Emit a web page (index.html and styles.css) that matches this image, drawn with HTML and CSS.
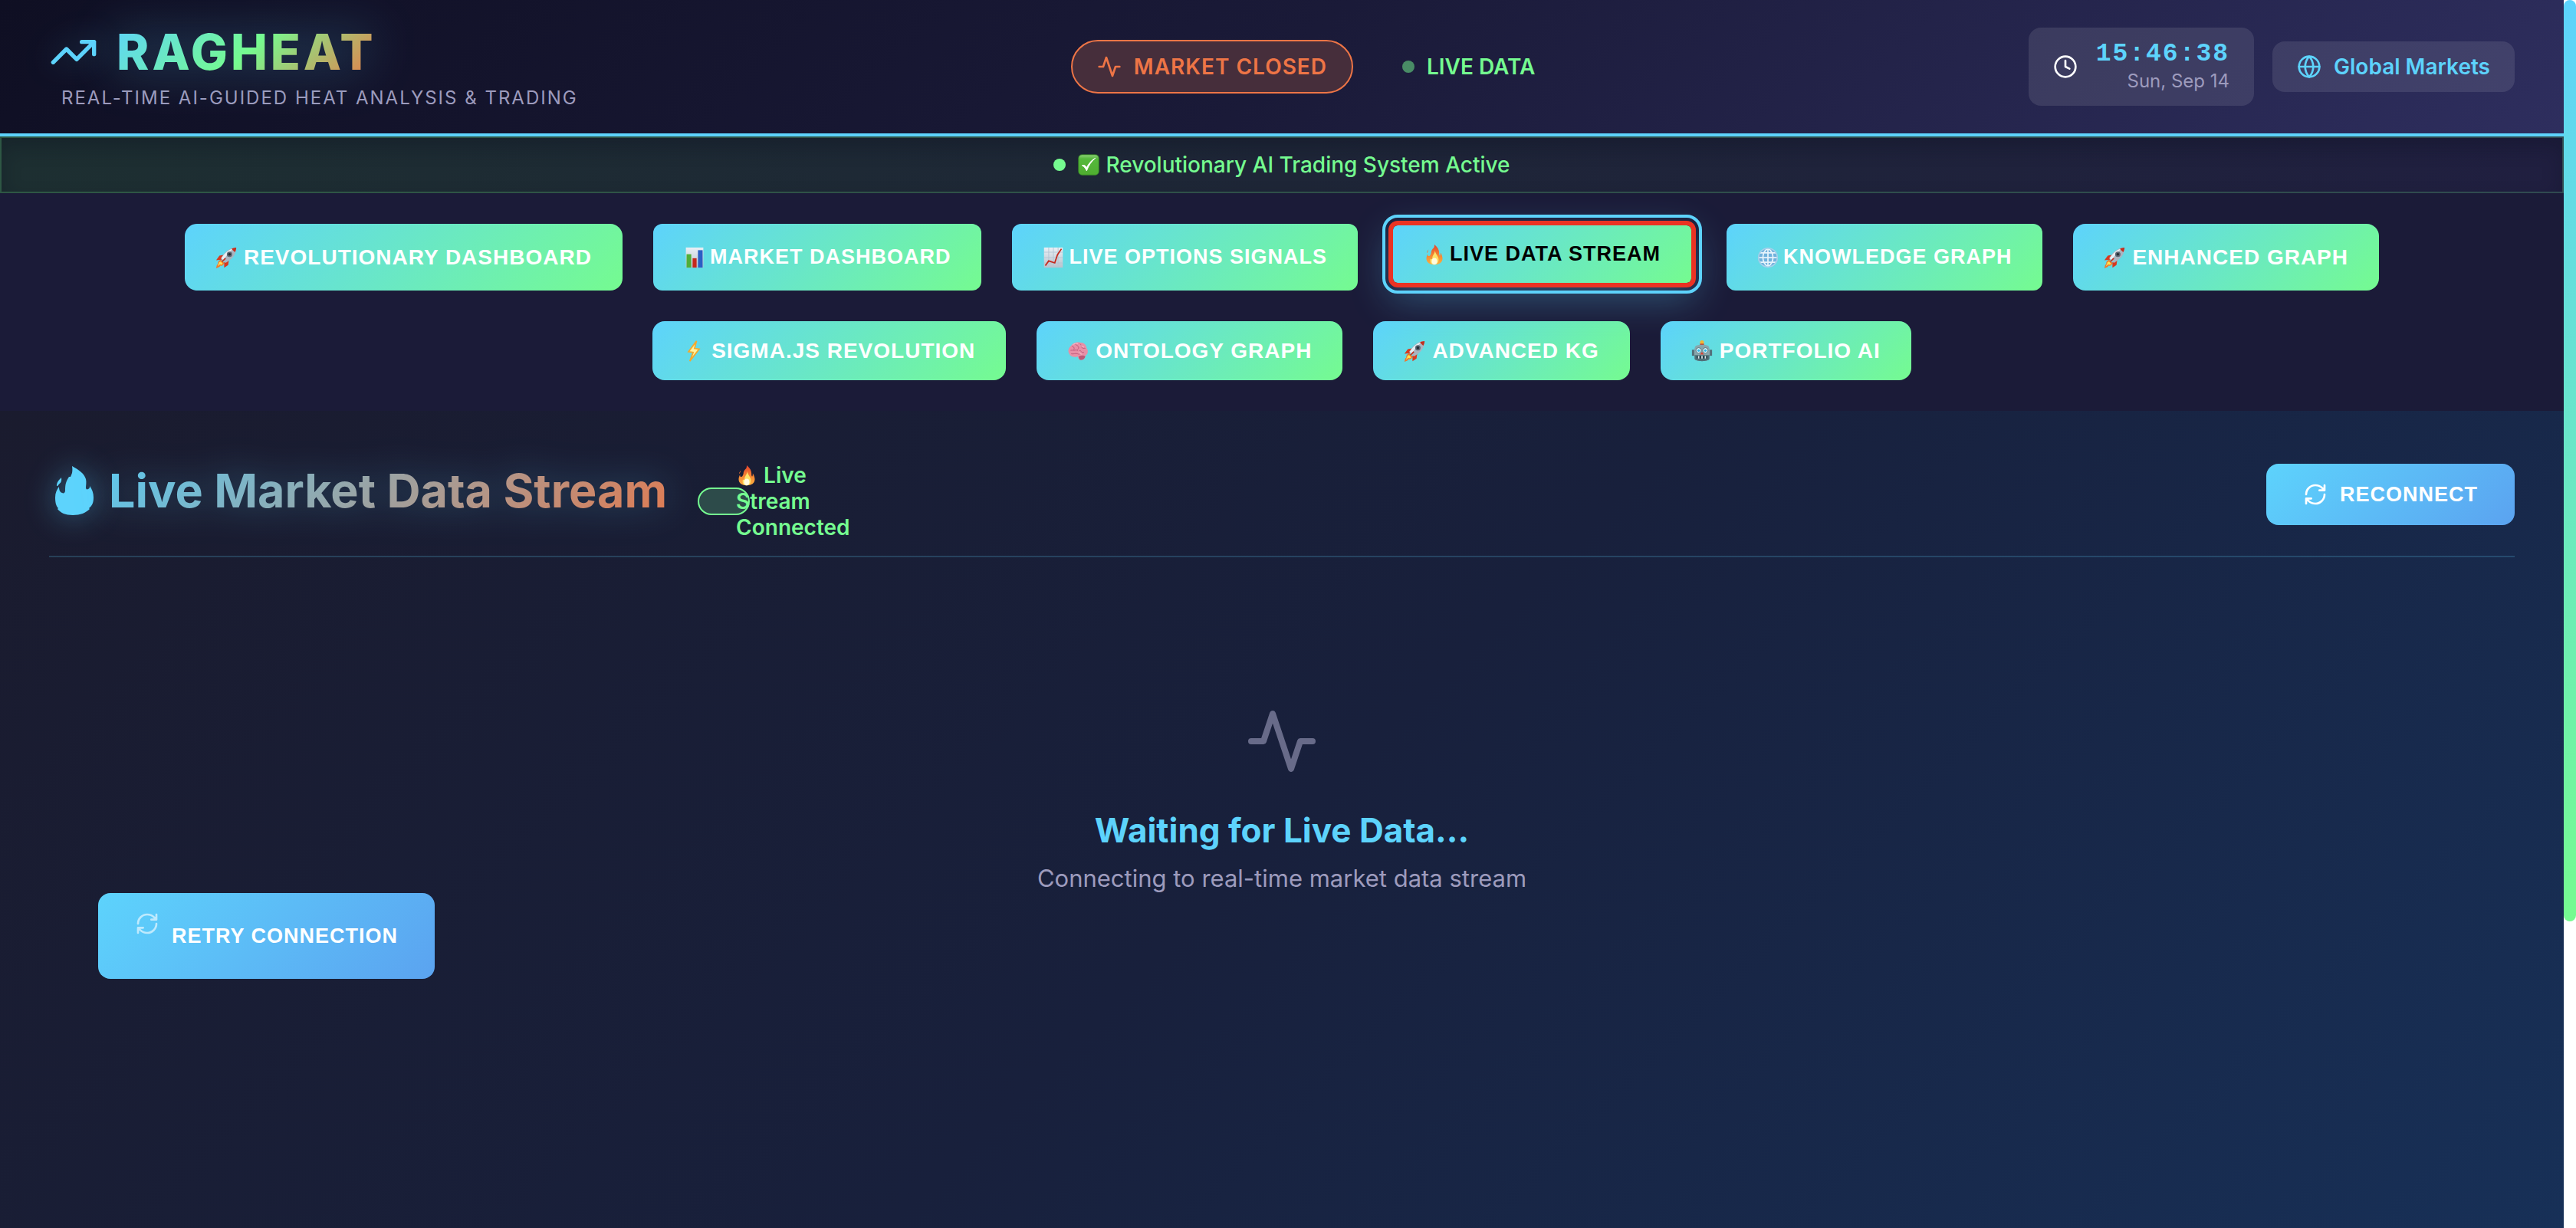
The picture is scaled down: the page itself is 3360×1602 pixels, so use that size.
FILE: index.html
```html
<!DOCTYPE html>
<html lang="en">
<head>
<meta charset="utf-8">
<meta name="viewport" content="width=device-width, initial-scale=1">
<title>RAGHEAT - Live Market Data Stream</title>
<link rel="stylesheet" href="styles.css">
</head>
<body>
<svg class="sprite" aria-hidden="true">
  <defs>
    <linearGradient id="flame-fill" x1="0" y1="0" x2="0" y2="1"><stop offset="0" stop-color="#e5432d"/><stop offset=".55" stop-color="#f58634"/><stop offset="1" stop-color="#fbb040"/></linearGradient>
    <linearGradient id="paper-fill" x1="0" y1="0" x2="0" y2="1"><stop offset="0" stop-color="#e9eff5"/><stop offset="1" stop-color="#b9c3cd"/></linearGradient>
    <linearGradient id="check-fill" x1="0" y1="0" x2="0" y2="1"><stop offset="0" stop-color="#8fd07a"/><stop offset=".2" stop-color="#55b83c"/><stop offset="1" stop-color="#4fae30"/></linearGradient>
    <symbol id="trend" viewBox="0 0 24 24"><path d="M22 7l-8.500 8.500-5-5L2 17M16 7h6v6"/></symbol>
    <symbol id="activity" viewBox="0 0 24 24"><path d="M22 12h-4l-3 9L9 3l-3 9H2"/></symbol>
    <symbol id="clock" viewBox="0 0 24 24"><circle cx="12" cy="12" r="10"/><path d="M12 6v6l4 2"/></symbol>
    <symbol id="globe" viewBox="0 0 24 24"><circle cx="12" cy="12" r="10"/><path d="M2 12h20M12 2a15.300 15.300 0 0 1 4 10 15.300 15.300 0 0 1-4 10 15.300 15.300 0 0 1-4-10 15.300 15.300 0 0 1 4-10z"/></symbol>
    <symbol id="refresh" viewBox="0 0 24 24"><path d="M3 12a9 9 0 0 1 9-9 9.750 9.750 0 0 1 6.740 2.740L21 8M21 3v5h-5M21 12a9 9 0 0 1-9 9 9.750 9.750 0 0 1-6.740-2.740L3 16M8 16H3v5"/></symbol>
    <symbol id="flame-shape" viewBox="0 0 50 64"><path d="M22 0c9 5 16 10 18 17 1 4 0 8 0 11 0 2 1 3 3 2 2-1 2-2 2-4 3 4 5 9 5 15 0 7-2 11-6 14l1 1c-5 5-12 8-22 8S7 61 3 56l1-1c-3-3-4-8-4-14s2-10 5-14c0 4 1 7 4 8 2 1 4 0 4-3 0-8 1-12 5-18h2c2-4 3-7 2-14zM8 15c1 7-2 7-5 11h-1c0-5 2-7 6-11z"/></symbol>
    <symbol id="e-fire" viewBox="0 0 32 32"><path fill="url(#flame-fill)" d="M16 1c5 4 7 8 7 12 0 2 0 3 1 5 1-1 1-3 1-5 2 3 3 6 3 9 0 6-5 9-12 9S4 28 4 22c0-3 1-5 2-7 0 2 0 3 1 3 2 1 3-1 4-4 0-4 2-6 4-8 1-2 1-3 1-5zM7 8c0 2 0 3-1 4l-1 2c-1-3 2-3 2-6z"/><path fill="#fde36a" d="M17 10c0 5 4 7 5 12 1 5-2 9-6 9s-7-3-6-8c1-1 2 0 3 0-1-5 3-7 4-13z"/><ellipse cx="16" cy="26" rx="4" ry="5" fill="#fffbe0"/></symbol>
    <symbol id="e-rocket" viewBox="0 0 32 32"><path fill="#f0762b" d="M8 19l5 5c-1 4-4 5-6 4 0 2-3 3-6 4 1-4 1-6 3-6-1-3 1-6 4-7z"/><path fill="#ffe34f" d="M8 22l3 3c-1 2-3 2-4 1l-4 3 2-4c0-2 1-3 3-3z"/><path fill="#d9381e" d="M12 12L6 13 1 20l8-1zM20 20l-1 7-6 4 0-8z"/><path fill="#a9b4c0" d="M31 1c0 9-4 16-16 23l-7-7C15 6 22 1 31 1z"/><path fill="#e8eef3" d="M28 2C20 4 14 9 9 17l3 3C17 12 22 6 28 2z"/><path fill="#c22e1d" d="M31 1c0 3-1 5-2 7l-5-5c2-1 4-2 7-2z"/><circle cx="21" cy="11" r="4" fill="#5d6672"/><circle cx="21" cy="11" r="2" fill="#262d36"/><path stroke="#c22e1d" stroke-width="2" d="M10 22l5-5"/></symbol>
    <symbol id="e-bars" viewBox="0 0 32 32"><path fill="url(#paper-fill)" d="M3 1h26v30H3z"/><path fill="#4fae38" d="M4 11h7v20H4z"/><path fill="#c5281c" d="M13 17h6v14h-6z"/><path fill="#2a5fc4" d="M21 5h7v26h-7z"/></symbol>
    <symbol id="e-chart" viewBox="0 0 32 32"><path fill="url(#paper-fill)" d="M2 1h28v30H2z"/><path d="M9 1v30M16 1v30M23 1v30M2 8h28M2 16h28M2 24h28" stroke="#b5c5d4" fill="none"/><path d="M4 28l5-7 9 3 4-12 6-9" fill="none" stroke="#c5281c" stroke-width="2"/></symbol>
    <symbol id="e-globe" viewBox="0 0 32 32"><circle cx="16" cy="16" r="14" fill="#6fb1dc"/><path fill="none" stroke="#e6f3fb" stroke-width="2" d="M2 16h28M4 9h24M4 23h24M16 2v28M16 2C6 9 6 23 16 30M16 2c10 7 10 21 0 28"/><circle cx="16" cy="16" r="14" fill="none" stroke="#a5d0ea" stroke-width="2"/></symbol>
    <symbol id="e-bolt" viewBox="0 0 32 32"><path fill="#fff3a0" stroke="#f3a92d" stroke-width="2" d="M20 1L8 17l7 1-5 13 14-18-7-1z"/></symbol>
    <symbol id="e-brain" viewBox="0 0 32 32"><path fill="#e88fa6" d="M3 20c-3-5 0-10 3-12 2-4 8-6 13-5 6 0 10 4 10 9 3 3 2 9-2 11 0 5-5 7-8 6-2-1-3-3-3-5-4 2-11 1-13-4z"/><path fill="#bb5876" d="M17 24c4-2 8-2 10 0-1 4-5 6-8 5-1-1-2-3-2-5z"/><path fill="none" stroke="#b95677" stroke-width="1" d="M7 9c3 0 4 2 3 5M5 15c3-1 5 1 9-1M12 5c1 3 4 2 5 5s-3 3-2 6M19 5c3 2 0 4 3 6s4 0 5 1M18 15c3 0 3 4 7 3M6 20c3 1 6-1 9 0s3 1 4 0"/><path fill="none" stroke="#f8c4d0" d="M8 7c2-2 5-3 8-2M19 8c3 0 4 2 6 2M17 18l5 3"/></symbol>
    <symbol id="e-robot" viewBox="0 0 32 32"><circle cx="16" cy="3" r="3" fill="#f3b635"/><path fill="#c2382a" d="M13 5h6v3h-6z"/><path fill="#53707a" d="M1 14h30v9H1z"/><path fill="#88a7ad" d="M7 8c5-2 13-2 18 0 3 3 3 9 2 20-3 4-19 4-22 0C4 17 4 11 7 8z"/><path fill="#4f7079" d="M5 22h22v6c-3 4-19 4-22 0z"/><circle cx="11" cy="15" r="4" fill="#e9fbff" stroke="#4b6b77"/><circle cx="21" cy="15" r="4" fill="#e9fbff" stroke="#4b6b77"/><circle cx="11" cy="15" r="2" fill="#30b7e5"/><circle cx="21" cy="15" r="2" fill="#30b7e5"/><path fill="#d34435" d="M16 17l3 4h-6z"/><path fill="#253f49" d="M8 23h16v4H8z"/><path stroke="#d8e4e7" stroke-width="2" d="M11 23v4M16 23v4M21 23v4"/></symbol>
    <symbol id="e-check" viewBox="0 0 32 32"><rect x="1" y="1" width="30" height="30" rx="5" fill="url(#check-fill)" stroke="#3d9a26"/><path d="M6 17c3 1 5 4 7 8 3-8 7-14 13-19-6 3-10 8-13 14-2-3-3-4-7-3z" fill="#fff" stroke="#fff"/></symbol>
  </defs>
</svg>

<div class="shell">
  <div class="app">
    <header class="topbar">
      <div class="brand">
        <div class="brand-row">
          <svg class="brand-icon line-icon" aria-hidden="true"><use href="#trend"/></svg>
          <h1 class="brand-name">RAGHEAT</h1>
        </div>
        <p class="tagline">REAL-TIME AI-GUIDED HEAT ANALYSIS &amp; TRADING</p>
      </div>
      <div class="market">
        <div class="market-pill"><svg class="line-icon icon" aria-hidden="true"><use href="#activity"/></svg>MARKET CLOSED</div>
        <div class="live"><span class="dot dot-dim"></span>LIVE DATA</div>
      </div>
      <div class="meta">
        <div class="tile">
          <svg class="line-icon icon" aria-hidden="true"><use href="#clock"/></svg>
          <div class="clock"><time class="time">15:46:38</time><span class="date">Sun, Sep 14</span></div>
        </div>
        <div class="tile tile-global"><svg class="line-icon icon" aria-hidden="true"><use href="#globe"/></svg>Global Markets</div>
      </div>
    </header>

    <div class="status"><span class="dot"></span><span class="status-text"><svg class="emoji" role="img" aria-label="Check"><use href="#e-check"/></svg>Revolutionary AI Trading System Active</span></div>

    <nav class="tabs">
      <button class="tab tab-round"><svg class="emoji" aria-hidden="true"><use href="#e-rocket"/></svg>REVOLUTIONARY DASHBOARD</button>
      <button class="tab"><svg class="emoji" aria-hidden="true"><use href="#e-bars"/></svg>MARKET DASHBOARD</button>
      <button class="tab"><svg class="emoji" aria-hidden="true"><use href="#e-chart"/></svg>LIVE OPTIONS SIGNALS</button>
      <button class="tab tab-active" aria-current="page"><svg class="emoji" aria-hidden="true"><use href="#e-fire"/></svg>LIVE DATA STREAM</button>
      <button class="tab"><svg class="emoji" aria-hidden="true"><use href="#e-globe"/></svg>KNOWLEDGE GRAPH</button>
      <button class="tab tab-round"><svg class="emoji" aria-hidden="true"><use href="#e-rocket"/></svg>ENHANCED GRAPH</button>
      <button class="tab tab-round"><svg class="emoji" aria-hidden="true"><use href="#e-bolt"/></svg>SIGMA.JS REVOLUTION</button>
      <button class="tab tab-round"><svg class="emoji" aria-hidden="true"><use href="#e-brain"/></svg>ONTOLOGY GRAPH</button>
      <button class="tab tab-round"><svg class="emoji" aria-hidden="true"><use href="#e-rocket"/></svg>ADVANCED KG</button>
      <button class="tab tab-round"><svg class="emoji" aria-hidden="true"><use href="#e-robot"/></svg>PORTFOLIO AI</button>
    </nav>

    <main class="stream">
      <div class="stream-head">
        <div class="stream-title">
          <svg class="flame" aria-hidden="true"><use href="#flame-shape"/></svg>
          <h2 class="title">Live Market Data Stream</h2>
          <div class="connection"><span class="connection-text"><svg class="emoji" aria-hidden="true"><use href="#e-fire"/></svg>Live Stream Connected</span></div>
        </div>
        <button class="action"><svg class="line-icon icon" aria-hidden="true"><use href="#refresh"/></svg>RECONNECT</button>
      </div>
      <section class="empty">
        <svg class="line-icon empty-icon" aria-hidden="true"><use href="#activity"/></svg>
        <h3 class="empty-title">Waiting for Live Data...</h3>
        <p class="empty-text">Connecting to real-time market data stream</p>
        <button class="action action-retry"><svg class="line-icon icon" aria-hidden="true"><use href="#refresh"/></svg>RETRY CONNECTION</button>
      </section>
    </main>
  </div>
  <div class="scroll-track" aria-hidden="true"><div class="scroll-thumb"></div></div>
</div>
</body>
</html>
```
FILE: styles.css
```css
:root {
  --cyan: #5dd3fc;
  --green: #75fb90;
  --orange: #ee7546;
  --muted: #9d9bbd;
  --nav: #1b1b38;
}

* { box-sizing: border-box; }

body {
  margin: 0;
  background: #fff;
  color: #fff;
  font: 400 28px/36px Inter, "Noto Sans", sans-serif;
}

h1, h2, h3, p { margin: 0; }

.sprite { position: absolute; width: 0; height: 0; }

.shell {
  display: grid;
  grid-template-columns: minmax(0, 1fr) 16px;
  min-height: 100vh;
}

.app { display: flex; flex-direction: column; background: var(--nav); }

.line-icon {
  flex: none;
  fill: none;
  stroke: currentColor;
  stroke-width: 2;
  stroke-linecap: round;
  stroke-linejoin: round;
}

.icon { width: 32px; height: 32px; }
.emoji { flex: none; width: 28px; height: 28px; }

.dot { flex: none; width: 16px; height: 16px; border-radius: 50%; background: var(--green); }
.dot-dim { opacity: .5; }

/* Header */
.topbar {
  display: flex;
  align-items: center;
  justify-content: space-between;
  padding: 28px 64px;
  border-bottom: 4px solid var(--cyan);
  background: linear-gradient(135deg, #0f0f23 0%, #1a1a38 50%, #2e2e5e 100%);
}

.brand-row { display: flex; align-items: center; gap: 24px; height: 80px; }
.brand-icon { width: 64px; height: 64px; color: var(--cyan); filter: drop-shadow(0 0 20px rgba(93, 211, 252, .3)); }

.brand-name {
  background: linear-gradient(135deg, var(--cyan) 0%, var(--green) 50%, var(--orange) 100%);
  -webkit-background-clip: text;
  background-clip: text;
  color: transparent;
  font-size: 64px;
  font-weight: 800;
  line-height: 80px;
  letter-spacing: 4px;
  filter: drop-shadow(0 0 32px rgba(93, 211, 252, .4));
}

.tagline { margin: 2px 0 0 16px; color: var(--muted); font-size: 24px; line-height: 36px; letter-spacing: 2px; }

.market { display: flex; align-items: center; gap: 64px; font-weight: 600; }

.market-pill {
  display: flex;
  align-items: center;
  gap: 16px;
  padding: 15px 32px;
  border: 2px solid var(--orange);
  border-radius: 40px;
  background: #462e3b;
  color: var(--orange);
  letter-spacing: 1px;
}

.live { display: flex; align-items: center; gap: 16px; color: var(--green); }

.meta { display: flex; align-items: center; gap: 24px; }

.tile {
  display: flex;
  align-items: center;
  gap: 24px;
  padding: 16px 32px;
  border-radius: 16px;
  background: rgba(255, 255, 255, .1);
}

.tile-global { gap: 16px; color: var(--cyan); font-weight: 600; line-height: 34px; }
.clock { display: flex; flex-direction: column; align-items: flex-end; }
.time { color: var(--cyan); font: 700 33px/38px "Liberation Mono", "Courier New", monospace; letter-spacing: 2px; }
.date { color: var(--muted); font-size: 24px; line-height: 32px; }

/* System status strip */
.status {
  display: flex;
  align-items: center;
  justify-content: center;
  gap: 16px;
  padding: 17px 64px;
  border: 2px solid rgba(117, 251, 144, .2);
  background: linear-gradient(90deg, #1d2f31 0%, #1e2637 50%, #201f40 100%);
  background-origin: border-box;
  box-shadow: inset 0 12px 24px rgba(10, 12, 30, .3);
  color: var(--green);
  font-weight: 500;
}

.status-text { display: flex; align-items: center; gap: 8px; }

/* Tabs */
.tabs { display: flex; flex-wrap: wrap; justify-content: center; gap: 40px; padding: 40px 64px; }

.tab {
  display: flex;
  align-items: center;
  gap: 6px;
  padding: 20px 40px;
  border: 0;
  border-radius: 12px;
  background: linear-gradient(135deg, var(--cyan), var(--green));
  color: #fff;
  font: 700 27px/37px "Liberation Sans", Arial, sans-serif;
  letter-spacing: 1px;
}

.tab-round { gap: 9px; border-radius: 16px; font-size: 28px; }

.tab-active {
  padding: 19px 40px;
  border: 6px solid #ea3323;
  background-clip: padding-box;
  color: #000;
  outline: 4px solid var(--cyan);
  outline-offset: 4px;
  box-shadow: 0 16px 50px rgba(93, 211, 252, .3);
  transform: translateY(-4px);
}

/* Stream */
.stream {
  flex: 1;
  padding: 64px 64px 0;
  background: linear-gradient(135deg, #1a1b2e 0%, #18203c 45%, #17345e 100%) 0 0 / 100% 150% no-repeat;
}

.stream-head {
  display: flex;
  align-items: flex-end;
  justify-content: space-between;
  height: 127px;
  padding-bottom: 40px;
  border-bottom: 2px solid rgba(93, 211, 252, .2);
}

.stream-title { display: flex; align-items: center; align-self: flex-start; height: 80px; padding-left: 8px; }

.flame { width: 50px; height: 64px; margin-right: 20px; fill: var(--cyan); filter: drop-shadow(0 0 20px rgba(93, 211, 252, .4)); }

.title {
  background: linear-gradient(135deg, #5dc8ee 0%, #e07b52 100%);
  -webkit-background-clip: text;
  background-clip: text;
  color: transparent;
  font-size: 61px;
  font-weight: 700;
  line-height: 80px;
  filter: drop-shadow(0 0 24px rgba(93, 211, 252, .3));
}

/* The label is wider than its capsule and runs out over the edge */
.connection {
  display: flex;
  align-items: center;
  width: 68px;
  height: 36px;
  margin: 28px 0 0 40px;
  padding-left: 48px;
  border: 2px solid var(--green);
  border-radius: 18px;
  background: #2d4b4a;
  color: var(--green);
  font-weight: 600;
}

.connection-text { flex: none; width: 152px; line-height: 34px; }
.connection-text .emoji { margin-right: 8px; vertical-align: -4px; }

.action {
  display: flex;
  align-items: center;
  gap: 16px;
  padding: 22px 48px;
  border: 0;
  border-radius: 16px;
  background: linear-gradient(135deg, var(--cyan), #5ba3f0);
  color: #fff;
  font: 700 27px/36px "Liberation Sans", Arial, sans-serif;
  letter-spacing: 1px;
}

.empty { display: flex; flex-direction: column; align-items: center; padding: 192px 64px 64px; }
.empty-icon { width: 96px; height: 96px; color: #686b89; }
.empty-title { margin-top: 40px; color: var(--cyan); font-size: 44px; font-weight: 700; line-height: 56px; }
.empty-text { margin-top: 16px; color: var(--muted); font-size: 31px; line-height: 38px; }
.action-retry { align-self: flex-start; padding: 24px 48px; }
.action-retry .icon { margin-bottom: 32px; opacity: .6; }

/* Scroll bar */
.scroll-track { background: #fff; }
.scroll-thumb { height: 75vh; border-radius: 8px; background: linear-gradient(var(--cyan), var(--green)); }
```
